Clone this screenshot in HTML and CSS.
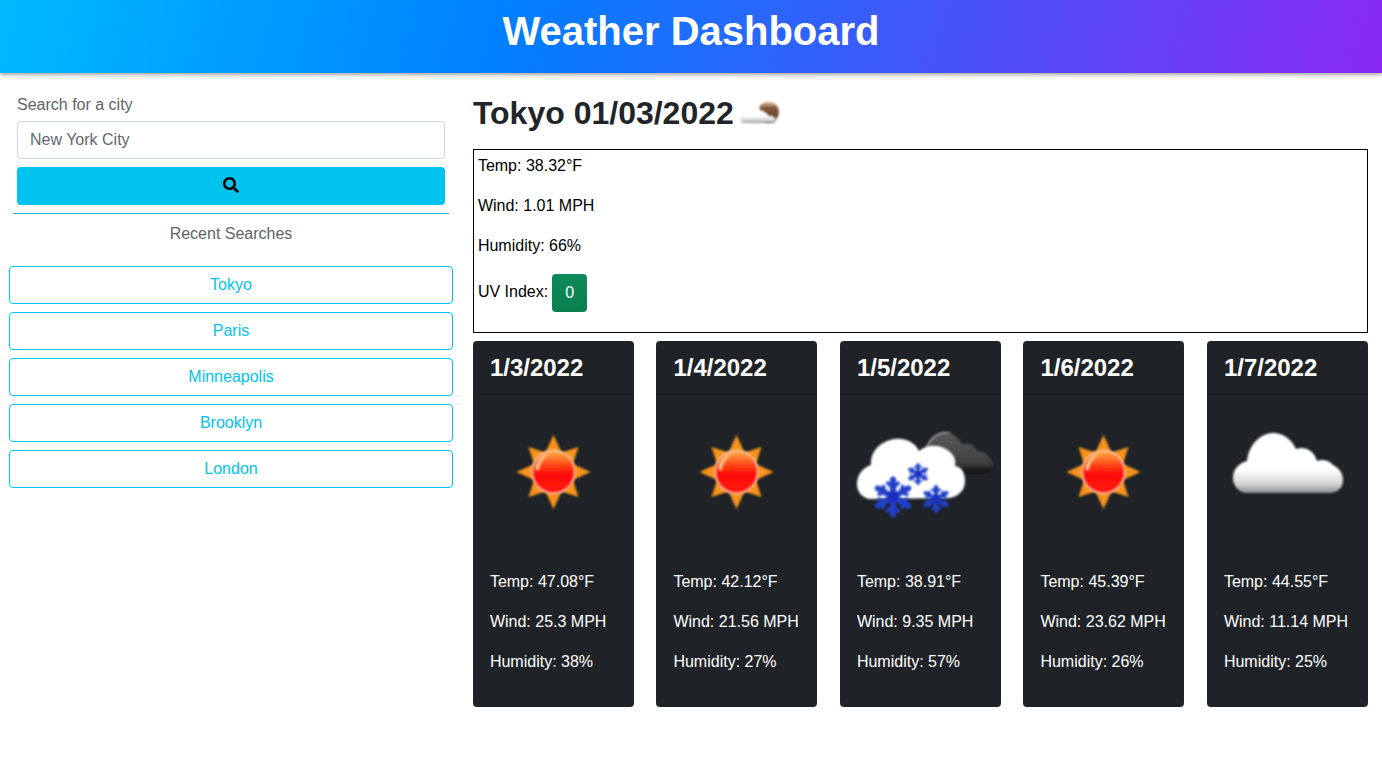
FILE: index.html

```html
<!DOCTYPE html>
<html lang="en">
<head>
    <meta charset="UTF-8">
    <meta name="viewport" content="width=device-width, initial-scale=1.0">
    <title>Weather Dashboard</title>
    <link rel="stylesheet" href="styles.css">
</head>
<body>
    <svg class="icon-defs" aria-hidden="true">
        <defs>
            <filter id="soft" x="-20%" y="-20%" width="140%" height="140%"><feGaussianBlur stdDeviation="1.3"/></filter>
            <filter id="softer" x="-20%" y="-20%" width="140%" height="140%"><feGaussianBlur stdDeviation="0.8"/></filter>
            <linearGradient id="discFill" x1="0" y1="0" x2="0" y2="1">
                <stop offset="0" stop-color="#ffb347"/>
                <stop offset="0.38" stop-color="#ff3a12"/>
                <stop offset="0.55" stop-color="#ff100c"/>
                <stop offset="1" stop-color="#ff140c"/>
            </linearGradient>
            <linearGradient id="cloudFill" x1="0" y1="0" x2="0" y2="1">
                <stop offset="0" stop-color="#ffffff"/>
                <stop offset="0.6" stop-color="#ffffff"/>
                <stop offset="0.85" stop-color="#d4d4d4"/>
                <stop offset="1" stop-color="#8d8d8d"/>
            </linearGradient>
            <linearGradient id="darkFill" x1="0" y1="0" x2="0" y2="1">
                <stop offset="0" stop-color="#5a5a5a"/>
                <stop offset="0.75" stop-color="#404040"/>
                <stop offset="1" stop-color="#0c0c0c"/>
            </linearGradient>
            <linearGradient id="moonFill" x1="0" y1="0" x2="0" y2="1">
                <stop offset="0" stop-color="#e9c9a8"/>
                <stop offset="0.3" stop-color="#80563a"/>
                <stop offset="1" stop-color="#5c3c26"/>
            </linearGradient>
            <g id="flake" stroke="#2340c8" stroke-width="3.4" stroke-linecap="round">
                <path d="M0 -10V10M-8.7 -5L8.7 5M-8.7 5L8.7 -5"/>
                <path d="M-3 -8L0 -5L3 -8M-3 8L0 5L3 8M-8 -1.5L-4.5 -2.5L-5.5 -6M8 -1.5L4.5 -2.5L5.5 -6M-8 1.5L-4.5 2.5L-5.5 6M8 1.5L4.5 2.5L5.5 6" stroke-width="2" fill="none"/>
                <circle r="3.4" fill="#1d2fc0" stroke="none"/>
            </g>
            <symbol id="sun" viewBox="0 0 128 142" overflow="visible">
                <g transform="translate(63.5 61)">
                    <polygon filter="url(#soft)" fill="#f7931e" points="0,-37 8,-19.4 25,-25 19.4,-8 37,0 19.4,8 25,25 8,19.4 0,37 -8,19.4 -25,25 -19.4,8 -37,0 -19.4,-8 -25,-25 -8,-19.4"/>
                    <g filter="url(#softer)">
                        <circle r="21.5" fill="url(#discFill)" stroke="#eec4aa" stroke-width="1.3"/>
                        <path d="M-18 -3C-17 -11 -11 -17 -4 -19C-10 -14 -14 -9 -15 -2Z" fill="#ffc98a"/>
                    </g>
                </g>
            </symbol>
            <symbol id="cloud" viewBox="0 0 128 142" overflow="visible">
                <path filter="url(#soft)" fill="url(#cloudFill)" d="M24 82C14 82 9 74 9 67C9 58 15 52 23 50C25 33 37 22 49 22C60 22 68 29 72 38C80 35 90 39 93 50C98 48 105 49 109 54C115 57 119 62 119 69C119 77 113 82 106 82Z"/>
            </symbol>
            <symbol id="snow" viewBox="0 0 128 142" overflow="visible">
                <path filter="url(#soft)" fill="url(#darkFill)" d="M72 62C68 50 66 40 71 31C76 23 86 19 93 22C99 25 103 29 105 33C112 31 118 35 120 40C127 40 135 46 136 54C136 59 133 62 128 62Z"/>
                <path filter="url(#soft)" fill="none" stroke="#a9a9a9" stroke-width="1.2" d="M70 37C73 27 83 20 93 22"/>
                <path filter="url(#soft)" fill="#ffffff" d="M12 88C4 86 0 80 0 73C0 63 7 56 14 54C13 43 20 33 33 29C46 25 58 31 62 40C70 33 83 33 92 40C98 45 99 50 98 55C105 56 108 62 108 70C108 80 100 87 90 87Z"/>
                <g filter="url(#soft)">
                    <use href="#flake" transform="translate(36 86) scale(1.75)"/>
                    <use href="#flake" transform="translate(61 63) scale(0.95)"/>
                    <use href="#flake" transform="translate(79 88) scale(1.2)"/>
                </g>
            </symbol>
        </defs>
    </svg>

    <header class="top-bar">
        <h1>Weather Dashboard</h1>
    </header>

    <div class="page">
        <aside class="sidebar">
            <form class="search-form">
                <label for="city">Search for a city</label>
                <input type="text" id="city" placeholder="New York City">
                <button type="button" class="search-btn" aria-label="Search">
                    <svg viewBox="0 0 512 512" width="16" height="16"><path d="M505 442.7L405.3 343c-4.5-4.5-10.6-7-17-7H372c27.6-35.3 44-79.7 44-128C416 93.1 322.9 0 208 0S0 93.1 0 208s93.1 208 208 208c48.3 0 92.7-16.4 128-44v16.3c0 6.4 2.5 12.5 7 17l99.7 99.7c9.4 9.4 24.6 9.4 33.9 0l28.3-28.3c9.4-9.4 9.4-24.6.1-34zM208 336c-70.7 0-128-57.2-128-128 0-70.7 57.2-128 128-128 70.7 0 128 57.2 128 128 0 70.7-57.2 128-128 128z"/></svg>
                </button>
            </form>
            <hr class="divider">
            <p class="recent-title">Recent Searches</p>
            <div class="recent-list">
                <button type="button" class="recent-btn">Tokyo</button>
                <button type="button" class="recent-btn">Paris</button>
                <button type="button" class="recent-btn">Minneapolis</button>
                <button type="button" class="recent-btn">Brooklyn</button>
                <button type="button" class="recent-btn">London</button>
            </div>
        </aside>

        <main class="content">
            <h2 class="city-title">Tokyo 01/03/2022
                <svg class="city-icon" viewBox="0 0 40 32" width="40" height="32">
                    <circle cx="28.5" cy="13" r="10.5" fill="url(#moonFill)" filter="url(#softer)"/>
                    <path fill="url(#cloudFill)" filter="url(#softer)" d="M5 24C1 24 0 21 0 19C0 16 3 14 5 14C6 9 10 6 14 6C17 6 19 8 20 11C24 12 27 14 29 17C32 16 35 18 36 21C36 23 35 24 33 24Z"/>
                </svg>
            </h2>
            <section class="today">
                <p>Temp: 38.32°F</p>
                <p>Wind: 1.01 MPH</p>
                <p>Humidity: 66%</p>
                <p class="uv-row"><span class="uv-label">UV Index:</span> <button type="button" class="uv-badge">0</button></p>
            </section>
            <section class="forecast">
                <article class="card">
                    <h4 class="card-head">1/3/2022</h4>
                    <div class="card-body">
                        <svg class="card-icon"><use href="#sun"/></svg>
                        <p>Temp: 47.08°F</p>
                        <p>Wind: 25.3 MPH</p>
                        <p>Humidity: 38%</p>
                    </div>
                </article>
                <article class="card">
                    <h4 class="card-head">1/4/2022</h4>
                    <div class="card-body">
                        <svg class="card-icon"><use href="#sun"/></svg>
                        <p>Temp: 42.12°F</p>
                        <p>Wind: 21.56 MPH</p>
                        <p>Humidity: 27%</p>
                    </div>
                </article>
                <article class="card">
                    <h4 class="card-head">1/5/2022</h4>
                    <div class="card-body">
                        <svg class="card-icon"><use href="#snow"/></svg>
                        <p>Temp: 38.91°F</p>
                        <p>Wind: 9.35 MPH</p>
                        <p>Humidity: 57%</p>
                    </div>
                </article>
                <article class="card">
                    <h4 class="card-head">1/6/2022</h4>
                    <div class="card-body">
                        <svg class="card-icon"><use href="#sun"/></svg>
                        <p>Temp: 45.39°F</p>
                        <p>Wind: 23.62 MPH</p>
                        <p>Humidity: 26%</p>
                    </div>
                </article>
                <article class="card">
                    <h4 class="card-head">1/7/2022</h4>
                    <div class="card-body">
                        <svg class="card-icon"><use href="#cloud"/></svg>
                        <p>Temp: 44.55°F</p>
                        <p>Wind: 11.14 MPH</p>
                        <p>Humidity: 25%</p>
                    </div>
                </article>
            </section>
        </main>
    </div>
</body>
</html>
```

FILE: styles.css

```css
* { box-sizing: border-box; }
body { margin: 0; font-family: "Liberation Sans", Arial, sans-serif; font-size: 16px; line-height: 24px; color: #212529; background: #fff; overflow: hidden; }
p { margin: 0; }
button { font-family: inherit; font-size: 16px; cursor: pointer; }

.icon-defs { display: block; width: 0; height: 0; }

.top-bar { height: 73px; background: linear-gradient(105deg, #00baff 0%, #0080ff 36%, #8a28f5 100%); box-shadow: 0 2px 4px rgba(0, 0, 0, .35); text-align: center; }
.top-bar h1 { margin: 0; font-size: 40px; line-height: 62px; font-weight: 700; color: #fff; }

.page { display: flex; }

.sidebar { flex: 0 0 462px; padding: 20px 0 0 9px; }
.search-form { display: flex; flex-direction: column; width: 444px; padding: 0 8px; }
.search-form label { margin-bottom: 4px; color: #5f6368; }
.search-form input { height: 38px; padding: 6px 12px; border: 1px solid #ced4da; border-radius: 4px; font: inherit; color: #495057; }
.search-form input::placeholder { color: #5f676e; opacity: 1; }
.search-btn { display: flex; align-items: center; justify-content: center; height: 38px; margin-top: 8px; padding: 0 0 2px; border: 0; border-radius: 4px; background: #00c3f0; }

.divider { width: 436px; margin: 8px 0 0 4px; border: 0; border-top: 1px solid #1fb1dd; }
.recent-title { width: 444px; margin: 8px 0 20px; text-align: center; color: #5f6368; }
.recent-list { display: flex; flex-direction: column; gap: 8px; width: 444px; }
.recent-btn { height: 38px; border: 1px solid #00c3f0; border-radius: 4px; background: #fff; color: #00c3f0; }

.content { flex: 1; padding: 0 14.1px 0 10.9px; }
.city-title { display: flex; align-items: center; gap: 6px; height: 76px; margin: 0; padding-top: 4px; font-size: 32px; font-weight: 700; color: #212529; }
.city-icon { margin-top: 4px; overflow: visible; }

.today { height: 184px; padding: 4px 4px 0; border: 1px solid #000; color: #000; }
.today p { margin-bottom: 16px; }
.uv-row { display: flex; align-items: center; gap: 4px; }
.uv-label { margin-bottom: 2px; }
.uv-badge { width: 35px; height: 38px; padding: 0; border: 0; border-radius: 4px; background: linear-gradient(#0d8a5a, #0a7f50); color: #fff; }

.forecast { display: flex; justify-content: space-between; margin-top: 8px; }
.card { width: 161px; height: 366px; border-radius: 4px; background: #1f2327; color: #fff; overflow: hidden; }
.card-head { height: 54px; margin: 0; padding: 12px 17px; border-bottom: 1px solid #1b1e22; font-size: 24px; line-height: 29px; font-weight: 700; }
.card-body { padding: 16px 17px; }
.card-icon { display: block; width: 128px; height: 142px; margin-bottom: 17px; overflow: visible; }
.card-body p { margin-bottom: 16px; }
```
